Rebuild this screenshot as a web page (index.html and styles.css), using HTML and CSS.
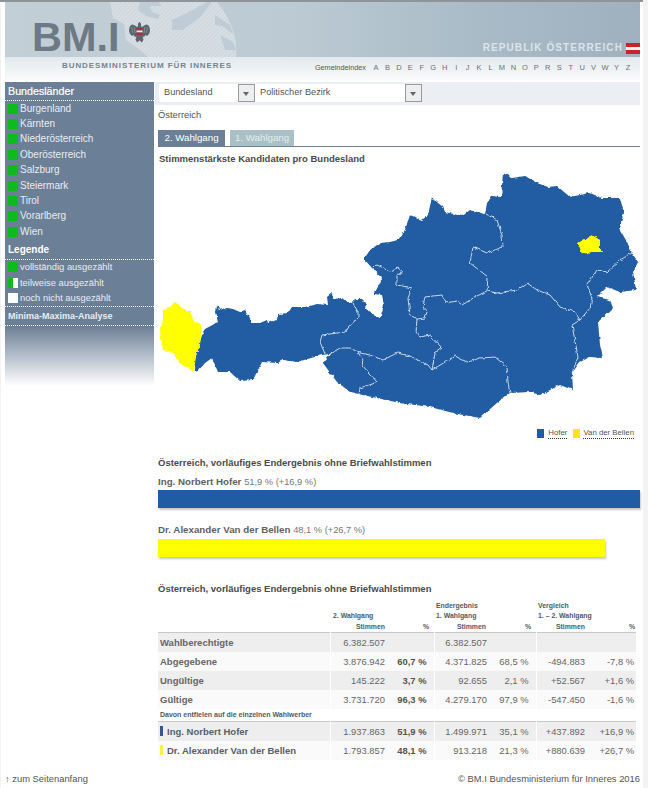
FILE: index.html
```html
<!DOCTYPE html>
<html lang="de">
<head>
<meta charset="utf-8">
<title>BM.I Stichwahl</title>
<link rel="stylesheet" href="styles.css">
</head>
<body>
<div class="page">
  <header class="header">
    <div class="banner">
      <svg class="phoenix" viewBox="100 2 150 55" aria-hidden="true">
        <defs>
          <pattern id="hatch" width="3" height="3" patternUnits="userSpaceOnUse" patternTransform="rotate(45)">
            <rect class="hatch-a" width="3" height="3"/>
            <rect class="hatch-b" width="1" height="3"/>
          </pattern>
        </defs>
        <path class="ph-light" d="M110 2 L113 18 L124 24 L126 40 L140 50 L148 57 L236 57 C238 40 232 20 217 2 Z"/>
        <path class="ph-dark" d="M207 2 L187 13 L172 20 L172 30 L183 30 L200 17 L212 2 Z"/>
        <path class="ph-dark" d="M140 2 L158 2 L162 6 L150 6 L152 12 L160 15 L158 19 L146 16 L138 10 Z"/>
        <path class="ph-dark" d="M215 15 L230 25 L233 34 L222 26 L215 25 Z"/>
        <path class="ph-dark" d="M220 35 L233 42 L236 50 L225 50 Z"/>
      </svg>
      <div class="logo">
        <span class="bmi">BM.I</span>
        <svg class="eagle" viewBox="0 0 21 21" aria-hidden="true">
          <path class="eagle-body" d="M10.500 0 L12 1.500 L12 4 L13 5 L15 3.500 L17.500 2.500 L19 3 L20.500 5 L21 9 L20 12 L18 14 L16.500 13 L15 15 L13.500 14.500 L14.500 17.500 L13 20.500 L10.500 18.500 L8 20.500 L6.500 17.500 L7.500 14.500 L6 15 L4.500 13 L3 14 L1 12 L0 9 L0.500 5 L2 3 L3.500 2.500 L6 3.500 L8 5 L9 4 L9 1.500 Z"/>
          <path class="eagle-line" d="M2.500 5 L4 11 M5 5 L6 11 M18.500 5 L17 11 M16 5 L15 11"/>
          <rect class="eagle-red" x="7.500" y="6" width="6" height="2.500"/>
          <rect class="eagle-white" x="7.500" y="8.500" width="6" height="2"/>
          <rect class="eagle-red" x="7.500" y="10.500" width="6" height="2.500"/>
        </svg>
      </div>
      <div class="republik">
        <span>REPUBLIK ÖSTERREICH</span>
        <span class="flag"></span>
      </div>
    </div>
    <div class="subbar">
      <span class="ministry">BUNDESMINISTERIUM FÜR INNERES</span>
      <nav class="index">
        <span class="index-label">Gemeindeindex</span>
        <span class="letters">
          <a>A</a><a>B</a><a>D</a><a>E</a><a>F</a><a>G</a><a>H</a><a>I</a><a>J</a><a>K</a><a>L</a><a>M</a><a>N</a><a>O</a><a>P</a><a>R</a><a>S</a><a>T</a><a>U</a><a>V</a><a>W</a><a>Y</a><a>Z</a>
        </span>
      </nav>
    </div>
  </header>

  <div class="layout">
    <aside class="side">
      <div class="side-panel">
        <h2 class="side-title">Bundesländer</h2>
        <ul class="side-list">
          <li><i class="sq sq-green"></i>Burgenland</li>
          <li><i class="sq sq-green"></i>Kärnten</li>
          <li><i class="sq sq-green"></i>Niederösterreich</li>
          <li><i class="sq sq-green"></i>Oberösterreich</li>
          <li><i class="sq sq-green"></i>Salzburg</li>
          <li><i class="sq sq-green"></i>Steiermark</li>
          <li><i class="sq sq-green"></i>Tirol</li>
          <li><i class="sq sq-green"></i>Vorarlberg</li>
          <li><i class="sq sq-green"></i>Wien</li>
        </ul>
        <h2 class="side-title side-title-legend">Legende</h2>
        <ul class="side-list side-legend">
          <li><i class="sq sq-green"></i>vollständig ausgezählt</li>
          <li><i class="sq sq-half"></i>teilweise ausgezählt</li>
          <li><i class="sq sq-white"></i>noch nicht ausgezählt</li>
        </ul>
        <h3 class="side-analysis">Minima-Maxima-Analyse</h3>
      </div>
      <div class="side-fade"></div>
    </aside>

    <main class="main">
      <div class="selects">
        <div class="select select-a"><span>Bundesland</span><b class="arrow"></b></div>
        <div class="select select-b"><span>Politischer Bezirk</span><b class="arrow"></b></div>
      </div>
      <div class="content">
        <p class="crumb">Österreich</p>
        <div class="tabs">
          <span class="tab tab-on">2. Wahlgang</span>
          <span class="tab tab-off">1. Wahlgang</span>
        </div>
        <h3 class="heading heading-map">Stimmenstärkste Kandidaten pro Bundesland</h3>
        <svg class="map" viewBox="155 166 485 260" aria-label="Karte Österreich">
          <defs>
            <filter id="rough" x="-5%" y="-5%" width="110%" height="110%">
              <feTurbulence type="fractalNoise" baseFrequency="0.22" numOctaves="2" seed="4" result="n"/>
              <feDisplacementMap in="SourceGraphic" in2="n" scale="3.500" xChannelSelector="R" yChannelSelector="G"/>
            </filter>
          </defs>
          <g class="map-shapes">
            <path class="land" d="M203 332 L205 329 L218 322 L216 312 L217 305 L219 310 L227 308 L233 309 L240 312 L245 310 L250 318 L252 323 L260 323 L267 320 L268 323 L278 318 L278 314 L288 313 L292 307 L305 307 L317 304 L328 305 L327 297 L332 293 L333 299 L342 298 L347 302 L352 303 L355 299 L362 299 L366 303 L365 308 L373 315 L380 318 L384 305 L382 295 L374 294 L380 283 L382 277 L372 268 L364 259 L370 250 L380 243 L390 242 L398 240 L405 230 L410 215 L422 220 L428 215 L432 197 L438 203 L443 207 L445 212 L462 216 L470 210 L485 214 L487 203 L492 196 L501 197 L503 173 L512 178 L525 176 L537 183 L548 187 L557 186 L570 197 L590 193 L602 198 L620 198 L624 213 L619 228 L627 242 L632 253 L638 262 L633 272 L636 290 L620 292 L607 287 L597 297 L610 300 L613 308 L598 322 L600 345 L603 358 L590 357 L580 362 L572 373 L573 390 L560 385 L540 395 L530 392 L510 393 L498 402 L480 418 L453 413 L430 407 L400 403 L363 395 L350 392 L337 382 L323 363 L330 354 L322 355 L297 362 L283 360 L277 363 L262 362 L253 380 L240 381 L230 372 L218 372 L212 358 L205 363 L197 372 L194 365 L197 352 Z"/>
            <path class="land-v" d="M175 302 L182 308 L190 312 L195 323 L202 324 L200 345 L196 355 L194 372 L183 365 L178 362 L173 352 L163 350 L160 332 L163 320 L163 310 L170 307 Z"/>
            <path class="land-v" d="M592 235 L600 240 L600 248 L603 252 L593 252 L582 254 L578 243 L583 240 Z"/>
            <path class="border" d="M353 303 L358 312 L358 318 L347 328 L345 332 L322 335 L320 342 L325 354"/>
            <path class="border" d="M330 354 L340 348 L350 348 L360 353 L370 355 L383 360 L397 353 L410 356 L428 365 L432 370"/>
            <path class="border" d="M357 351 L363 360 L362 365 L377 382 L360 388 L359 394"/>
            <path class="border" d="M372 270 L377 265 L390 271 L398 268 L403 272 L397 275 L397 285 L412 288 L408 298 L410 315 L417 319 L425 318 L427 312 L423 307 L425 297 L442 295 L446 303 L457 301 L462 305 L475 297 L487 291"/>
            <path class="border" d="M417 319 L416 332 L420 337 L430 335 L442 348 L435 353 L432 370"/>
            <path class="border" d="M432 370 L455 356 L467 362 L480 358 L495 357 L507 367 L508 382 L510 393"/>
            <path class="border" d="M486 214 L497 220 L502 235 L503 247 L487 253 L473 247 L470 263 L488 277 L487 291"/>
            <path class="border" d="M487 291 L497 293 L517 290 L527 283 L537 290 L550 295 L560 307 L575 312 L580 320"/>
            <path class="border" d="M632 253 L620 260 L607 272 L597 270 L587 285 L592 298 L590 308 L580 320"/>
            <path class="border" d="M580 320 L572 325 L578 357 L572 373"/>
          </g>
        </svg>
        <div class="map-key">
          <i class="key key-blue"></i><span class="key-label">Hofer</span>
          <i class="key key-yellow"></i><span class="key-label">Van der Bellen</span>
        </div>

        <h3 class="heading heading-bars">Österreich, vorläufiges Endergebnis ohne Briefwahlstimmen</h3>
        <p class="bar-label">Ing. Norbert Hofer <span>51,9 % (+16,9 %)</span></p>
        <div class="bar bar-blue"></div>
        <p class="bar-label bar-label-2">Dr. Alexander Van der Bellen <span>48,1 % (+26,7 %)</span></p>
        <div class="bar bar-yellow"></div>

        <h3 class="heading heading-table">Österreich, vorläufiges Endergebnis ohne Briefwahlstimmen</h3>
        <table class="results">
          <colgroup>
            <col class="c-name"><col class="c-a1"><col class="c-a2"><col class="c-b1"><col class="c-b2"><col class="c-c1"><col class="c-c2">
          </colgroup>
          <thead>
            <tr>
              <th></th>
              <th colspan="2" class="group group-a">2. Wahlgang</th>
              <th colspan="2" class="group">Endergebnis<br>1. Wahlgang</th>
              <th colspan="2" class="group">Vergleich<br>1. – 2. Wahlgang</th>
            </tr>
            <tr class="units">
              <th></th>
              <th class="u-a">Stimmen</th><th class="u-p">%</th>
              <th class="u-b">Stimmen</th><th class="u-p">%</th>
              <th class="u-a">Stimmen</th><th class="u-a">%</th>
            </tr>
          </thead>
          <tbody>
            <tr class="odd first"><th>Wahlberechtigte</th><td>6.382.507</td><td class="sep"></td><td>6.382.507</td><td class="sep"></td><td></td><td></td></tr>
            <tr class="even"><th>Abgegebene</th><td>3.876.942</td><td class="sep strong">60,7 %</td><td>4.371.825</td><td class="sep">68,5 %</td><td>-494.883</td><td>-7,8 %</td></tr>
            <tr class="odd"><th>Ungültige</th><td>145.222</td><td class="sep strong">3,7 %</td><td>92.655</td><td class="sep">2,1 %</td><td>+52.567</td><td>+1,6 %</td></tr>
            <tr class="even"><th>Gültige</th><td>3.731.720</td><td class="sep strong">96,3 %</td><td>4.279.170</td><td class="sep">97,9 %</td><td>-547.450</td><td>-1,6 %</td></tr>
            <tr class="note"><th colspan="7">Davon entfielen auf die einzelnen Wahlwerber</th></tr>
            <tr class="odd first"><th><i class="mark mark-blue"></i>Ing. Norbert Hofer</th><td>1.937.863</td><td class="sep strong">51,9 %</td><td>1.499.971</td><td class="sep">35,1 %</td><td>+437.892</td><td>+16,9 %</td></tr>
            <tr class="even"><th><i class="mark mark-yellow"></i>Dr. Alexander Van der Bellen</th><td>1.793.857</td><td class="sep strong">48,1 %</td><td>913.218</td><td class="sep">21,3 %</td><td>+880.639</td><td>+26,7 %</td></tr>
          </tbody>
        </table>
      </div>
    </main>
  </div>

  <footer class="footer">
    <span>↑ zum Seitenanfang</span>
    <span>© BM.I Bundesministerium für Inneres 2016</span>
  </footer>
</div>
</body>
</html>
```

FILE: styles.css
```css
* { box-sizing: border-box; }
html, body { margin: 0; padding: 0; }
body {
  background: #f3f3f3;
  font-family: "Liberation Sans", Arial, sans-serif;
  font-size: 10px;
  color: #555;
  height: 788px;
  overflow: hidden;
}
.page {
  width: 642px;
  height: 788px;
  margin-left: 1px;
  padding: 2px 3px 0 4px;
  background: #fff;
}
.page::before {
  content: "";
  display: block;
  height: 2px;
  margin: -2px -3px 0 -5px;
  background: #8f9498;
}

/* header */
.header { height: 78px; }
.banner {
  position: relative;
  height: 55px;
  background: linear-gradient(90deg, #c3cfd7 0%, #bccad3 45%, #a9bbc7 75%, #9fb1bf 100%);
  display: flex;
  justify-content: space-between;
  align-items: flex-end;
}
.phoenix {
  position: absolute;
  left: 95px;
  top: 0;
  width: 150px;
  height: 55px;
}
.ph-light { fill: url(#hatch); }
.hatch-a { fill: #d6dee3; }
.hatch-b { fill: #ccd6dc; }
.ph-dark { fill: #bfccd5; }
.logo {
  position: relative;
  display: flex;
  align-items: flex-start;
  margin: 0 0 -3px 27px;
  height: 46px;
  gap: 9px;
}
.bmi {
  font-size: 41.500px;
  line-height: 46px;
  font-weight: 700;
  color: #6d7a85;
}
.eagle { width: 21px; height: 21px; margin-top: 8px; }
.eagle-body { fill: #5b666f; }
.eagle-line { fill: none; stroke: #8b969e; stroke-width: 0.700px; }
.eagle-red { fill: #a3333f; }
.eagle-white { fill: #e6e9eb; }
.republik {
  position: relative;
  display: flex;
  align-items: center;
  gap: 3px;
  margin-bottom: 3px;
  font-size: 10px;
  line-height: 12px;
  font-weight: 700;
  letter-spacing: 1.100px;
  color: #dce4ea;
}
.flag {
  width: 14px;
  height: 11px;
  background: linear-gradient(#c8232c 0 36%, #f2f2f2 36% 64%, #c8232c 64%);
}
.subbar {
  height: 23px;
  display: flex;
  justify-content: space-between;
  align-items: flex-start;
  padding: 3px 8px 0 57px;
  background: linear-gradient(#e2e9ed, #f9fafb);
}
.ministry {
  font-size: 8px;
  line-height: 11px;
  font-weight: 700;
  letter-spacing: 0.930px;
  color: #76838d;
  white-space: nowrap;
}
.index { display: flex; align-items: center; gap: 6px; margin-top: 3px; }
.index-label { font-size: 7.300px; line-height: 10px; color: #555; white-space: nowrap; }
.letters { display: flex; width: 260px; justify-content: space-between; }
.letters a { font-size: 7.500px; line-height: 10px; color: #6f6f6f; width: 8px; text-align: center; }

/* layout */
.layout { display: flex; margin-top: 2px; height: 690px; }
.side { width: 149px; flex: none; }
.side-panel { background: #6b7f96; height: 244px; color: #fff; }
.side-title {
  margin: 0;
  height: 19px;
  padding: 3px 0 0 3px;
  font-size: 10.700px;
  line-height: 13px;
  font-weight: 400;
  color: #fff;
  border-bottom: 1px dotted #fff;
  -webkit-text-stroke: 0.200px #fff;
}
.side-title-legend { height: 20px; padding-top: 3px; font-weight: 700; -webkit-text-stroke: 0; font-size: 10px; }
.side-list { list-style: none; margin: 0; padding: 0; }
.side-list li {
  height: 15.400px;
  display: flex;
  align-items: center;
  padding-left: 3px;
  font-size: 10px;
  line-height: 14px;
  color: #e8edf2;
}
.side-legend { border-bottom: 1px dotted #fff; }
.side-legend li { font-size: 9.400px; }
.side-analysis {
  margin: 0;
  height: 19px;
  padding: 3px 0 0 3px;
  font-size: 9px;
  line-height: 13px;
  font-weight: 700;
  color: #e8edf2;
  border-bottom: 1px dotted #fff;
}
.sq { width: 10px; height: 10px; margin-right: 2px; flex: none; }
.sq-green { background: #0dbb1c; }
.sq-half { background: linear-gradient(90deg, #0dbb1c 0 50%, #fff 50%); }
.sq-white { background: #fff; }
.side-fade { height: 60px; background: linear-gradient(#6b7f96, #fff); }

/* main */
.main { width: 485px; flex: none; margin-left: 1px; }
.selects {
  height: 23px;
  display: flex;
  padding: 2px 0 0 4px;
  background: #ebeff3;
}
.select {
  height: 18px;
  display: flex;
  justify-content: space-between;
  background: #fff;
  font-size: 9.200px;
  line-height: 17px;
  color: #555;
}
.select span { padding-left: 5px; }
.select-a { width: 96px; }
.select-b { width: 167px; }
.arrow {
  position: relative;
  width: 17px;
  height: 18px;
  background: #eceef0;
  border: 1px solid #9a9a9a;
}
.arrow::after {
  content: "";
  position: absolute;
  left: 4px;
  top: 7px;
  border-left: 3.500px solid transparent;
  border-right: 3.500px solid transparent;
  border-top: 4px solid #666;
}
.content { padding-left: 3px; }
.crumb { margin: 0; padding-top: 3px; height: 25px; line-height: 14px; font-size: 9.400px; color: #555; }
.tabs {
  display: flex;
  gap: 5px;
  height: 17px;
  border-bottom: 1px solid #6b7f96;
}
.tab {
  height: 16px;
  padding: 0 6.500px;
  font-size: 9.700px;
  line-height: 16px;
  color: #fff;
}
.tab-on { background: #6b7f96; }
.tab-off { background: #a9c1c6; color: #e4eeee; padding: 0 5px; }
.heading {
  margin: 0;
  font-size: 9.500px;
  line-height: 13px;
  font-weight: 700;
  color: #4a4a4a;
  white-space: nowrap;
}
.heading-map { padding: 5px 0 0 1px; height: 19px; }
.map { display: block; width: 485px; height: 260px; margin-left: -3px; }
.map-shapes { filter: url(#rough); }
.land { fill: #205ca3; }
.land-v { fill: #ffff00; }
.border { fill: none; stroke: #dbe6f2; stroke-width: 0.900px; stroke-linejoin: round; }
.map-key {
  display: flex;
  align-items: center;
  justify-content: flex-end;
  height: 14px;
  padding-right: 6px;
  font-size: 7.800px;
  line-height: 10px;
  color: #555;
}
.key { width: 7px; height: 9px; margin-right: 4px; }
.key-blue { background: #205ca3; }
.key-yellow { background: #ffe800; margin-left: 6px; margin-right: 3px; }
.key-label { border-bottom: 1px dotted #333; }
.heading-bars { margin-top: 16px; }
.bar-label { margin: 0; font-size: 9.750px; line-height: 13px; color: #5f5f5f; font-weight: 700; white-space: nowrap; }
.bar-label span { font-size: 9.300px; font-weight: 400; color: #777; }
.heading-bars + .bar-label { margin-top: 6px; }
.bar-label-2 { margin-top: 15px; }
.bar { height: 18px; margin-top: 1px; box-shadow: 1px 2px 2px rgba(90, 90, 90, 0.35); }
.bar-blue { width: 482px; background: #205ca3; }
.bar-yellow { width: 447px; margin-top: 2px; background: #ffff00; }
.heading-table { margin-top: 25px; }

/* table */
.results {
  width: 478px;
  margin-top: 5px;
  border-collapse: collapse;
  table-layout: fixed;
  font-size: 9.400px;
  color: #666;
}
.c-name { width: 172px; }
.c-a1 { width: 56px; }
.c-a2 { width: 48px; }
.c-b1 { width: 54px; }
.c-b2 { width: 48px; }
.c-c1 { width: 50px; }
.c-c2 { width: 50px; }
.results th, .results td { padding: 0; text-align: right; white-space: nowrap; }
.results td { padding-right: 1px; }
.results thead th { font-size: 6.900px; line-height: 10px; color: #4d5a66; font-weight: 700; vertical-align: bottom; }
.results .group { text-align: left; padding-left: 2px; height: 21px; }
.results .group-a { padding-left: 3px; }
.results .units th { height: 11px; }
.results .units .u-a { padding-right: 1px; }
.results .units .u-b { padding-right: 2px; }
.results .units .u-p { padding-right: 5px; }
.results tbody th { text-align: left; font-size: 9.500px; font-weight: 700; color: #666; padding-left: 2px; }
.results tbody tr { height: 19px; }
.odd th, .odd td { background: #eeeeee; }
.even th, .even td { background: #fafafa; }
.first th, .first td { border-top: 1px solid #c8c8c8; }
.results tbody tr.first { height: 20px; }
.results tbody th:first-child { border-right: 1px solid #fff; }
.results .sep { border-right: 1px solid #fff; padding-right: 7px; }
.results tr td:last-child { padding-right: 2px; }
.strong { font-weight: 700; color: #555; }
.results tbody tr.note { height: 12px; }
.results .note th { font-size: 7px; line-height: 10px; color: #4d5a66; background: #fff; border: 0; }
.mark { display: inline-block; width: 3px; height: 10px; margin-right: 4px; vertical-align: -1px; }
.mark-blue { background: #34588f; }
.mark-yellow { background: #fbf04a; }
.results tbody th:has(.mark) { color: #55606c; }

/* footer */
.footer {
  display: flex;
  justify-content: space-between;
  font-size: 9.400px;
  line-height: 12px;
  color: #555;
  padding-top: 1px;
}
```
